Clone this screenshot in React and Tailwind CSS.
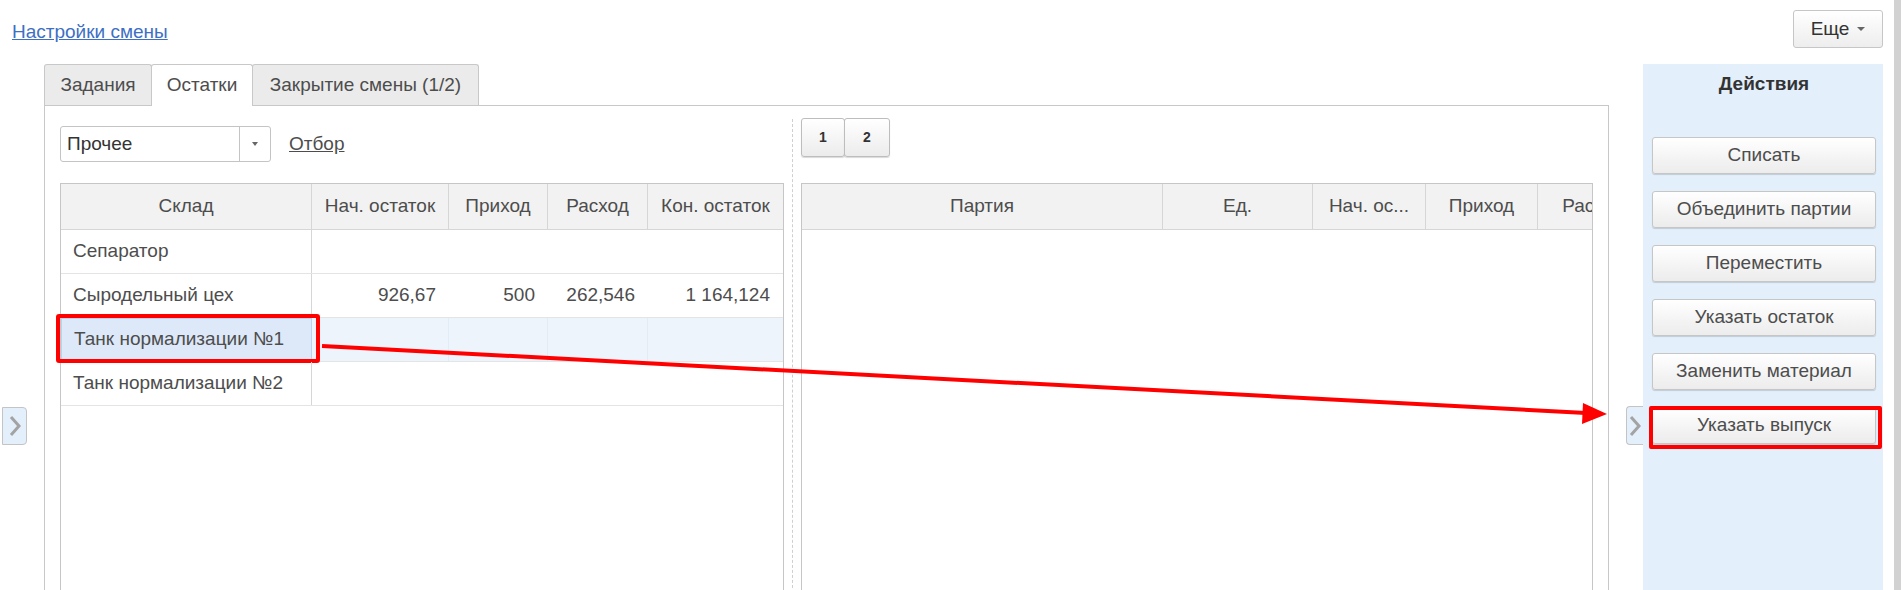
const leftCols = [
  { title: "Склад", w: "w-[251px]" },
  { title: "Нач. остаток", w: "w-[137px]" },
  { title: "Приход", w: "w-[99px]" },
  { title: "Расход", w: "w-[100px]" },
  { title: "Кон. остаток", w: "w-[135px]" },
];

const rightCols = [
  { title: "Партия", w: "w-[361px]" },
  { title: "Ед.", w: "w-[150px]" },
  { title: "Нач. ос...", w: "w-[113px]" },
  { title: "Приход", w: "w-[112px]" },
  { title: "Расход", w: "w-[112px]" },
];

const rows = [
  { name: "Сепаратор", vals: ["", "", "", ""] },
  { name: "Сыродельный цех", vals: ["926,67", "500", "262,546", "1 164,124"] },
  { name: "Танк нормализации №1", vals: ["", "", "", ""], selected: true },
  { name: "Танк нормализации №2", vals: ["", "", "", ""] },
];

const actions = [
  "Списать",
  "Объединить партии",
  "Переместить",
  "Указать остаток",
  "Заменить материал",
  "Указать выпуск",
];

function Chevron({ className }) {
  return (
    <div className={className}>
      <svg width="12" height="22" viewBox="0 0 12 22">
        <polyline points="2,2 10,11 2,20" fill="none" stroke="#a3a3a3" strokeWidth="3" />
      </svg>
    </div>
  );
}

function ActionButton({ label, marked }) {
  return (
    <div className="relative">
      <button className="w-[224px] h-[37px] rounded-[3px] border border-[#c6c6c6] bg-gradient-to-b from-white to-[#ececec] shadow-[0_1px_1px_rgba(0,0,0,0.15)] text-[#4d4d4d]">
        {label}
      </button>
      {marked && (
        <div className="absolute -left-[3px] right-[1px] -top-[1px] -bottom-[5px] border-4 border-[#ff0000] rounded-[2px]" />
      )}
    </div>
  );
}

export default function App() {
  return (
    <div className="relative flex h-[590px] w-[1901px] overflow-hidden bg-white font-['Liberation_Sans',Arial,sans-serif] text-[19px] text-[#4d4d4d]">
      <div className="flex w-[1894px] flex-col">
        {/* Top bar */}
        <div className="flex h-[64px] shrink-0 items-start justify-between">
          <a className="ml-[12px] mt-[21px] leading-[22px] text-[#3d6fc4] underline">Настройки смены</a>
          <button className="mr-[11px] mt-[10px] flex h-[38px] w-[90px] items-center justify-center gap-[8px] rounded-[3px] border border-[#c6c6c6] bg-gradient-to-b from-white to-[#ededed] text-[#333]">
            Еще
            <span className="border-x-[4px] border-t-[4px] border-x-transparent border-t-[#666]" />
          </button>
        </div>

        <div className="flex min-h-0 flex-1 overflow-hidden">
          {/* left collapse */}
          <div className="w-[44px]">
            <Chevron className="ml-[2px] mt-[343px] flex h-[38px] w-[25px] items-center justify-center rounded-r-[4px] border border-[#c4c4c4] bg-[#e3effb]" />
          </div>

          {/* Tab panel */}
          <div className="flex w-[1565px] flex-col">
            <div className="flex h-[41px] shrink-0 items-end">
              <div className="flex h-[41px] w-[108px] items-center justify-center rounded-t-[3px] border border-b-0 border-[#c8c8c8] bg-[#ebebeb]">
                Задания
              </div>
              <div className="relative z-10 -mb-px -ml-px flex h-[42px] w-[102px] items-center justify-center rounded-t-[3px] border border-b-0 border-[#c8c8c8] bg-white pb-px">
                Остатки
              </div>
              <div className="-ml-px flex h-[41px] w-[227px] items-center justify-center rounded-t-[3px] border border-b-0 border-[#c8c8c8] bg-[#ebebeb]">
                Закрытие смены (1/2)
              </div>
            </div>

            <div className="flex flex-1 border border-b-0 border-[#c8c8c8] px-[15px]">
              {/* left pane */}
              <div className="w-[724px] pt-[20px]">
                <div className="flex h-[36px] items-center">
                  <div className="flex h-[36px] w-[211px] rounded-[3px] border border-[#c4c4c4]">
                    <div className="flex flex-1 items-center pl-[6px] text-[#333]">Прочее</div>
                    <div className="flex w-[31px] items-center justify-center border-l border-[#c4c4c4]">
                      <span className="border-x-[3px] border-t-[4px] border-x-transparent border-t-[#666]" />
                    </div>
                  </div>
                  <a className="ml-[18px] text-[#4d4d4d] underline">Отбор</a>
                </div>

                <div className="mt-[21px] h-[420px] border border-[#c6c6c6]">
                  <div className="flex h-[46px] border-b border-[#d6d6d6] bg-[#f2f2f2]">
                    {leftCols.map((c, i) => (
                      <div
                        key={c.title}
                        className={`${c.w} flex items-center justify-center ${i < 4 ? "border-r border-[#d6d6d6]" : ""}`}
                      >
                        {c.title}
                      </div>
                    ))}
                  </div>
                  {rows.map((r) => (
                    <div
                      key={r.name}
                      className={`flex h-[44px] border-b border-[#e4e4e4] ${r.selected ? "bg-[#edf4fc]" : ""}`}
                    >
                      <div
                        className={`relative flex w-[251px] items-center border-r pl-[12px] ${
                          r.selected ? "border border-[#b8d3f0] bg-[#dde9f8]" : "border-[#d6d6d6]"
                        }`}
                      >
                        {r.name}
                        {r.selected && (
                          <div className="absolute -left-[6px] -right-[9px] -top-[5px] -bottom-[3px] border-4 border-[#ff0000] rounded-[3px]" />
                        )}
                      </div>
                      {r.vals.map((v, i) => (
                        <div
                          key={i}
                          className={`${leftCols[i + 1].w} flex items-center justify-end pr-[13px] ${
                            r.selected && i < 3 ? "border-r border-[#e2ecf7]" : ""
                          }`}
                        >
                          {v}
                        </div>
                      ))}
                    </div>
                  ))}
                </div>
              </div>

              {/* splitter */}
              <div className="flex w-[17px] justify-center pt-[13px]">
                <div className="h-full border-l border-dashed border-[#cfcfcf]" />
              </div>

              {/* right pane */}
              <div className="w-[792px] pt-[12px]">
                <div className="flex h-[39px]">
                  <button className="h-[39px] w-[44px] rounded-[3px] border border-[#bdbdbd] bg-gradient-to-b from-white to-[#ececec] text-[14px] font-bold text-[#333] shadow-[0_1px_1px_rgba(0,0,0,0.15)]">
                    1
                  </button>
                  <button className="-ml-px h-[39px] w-[46px] rounded-[3px] border border-[#bdbdbd] bg-gradient-to-b from-white to-[#ececec] text-[14px] font-bold text-[#333] shadow-[0_1px_1px_rgba(0,0,0,0.15)]">
                    2
                  </button>
                </div>

                <div className="mt-[26px] h-[420px] overflow-hidden border border-[#c6c6c6]">
                  <div className="flex h-[46px] border-b border-[#d6d6d6] bg-[#f2f2f2]">
                    {rightCols.map((c) => (
                      <div
                        key={c.title + c.w}
                        className={`${c.w} flex shrink-0 items-center justify-center border-r border-[#d6d6d6]`}
                      >
                        {c.title}
                      </div>
                    ))}
                  </div>
                </div>
              </div>
            </div>
          </div>

          {/* right collapse */}
          <div className="w-[34px]">
            <Chevron className="ml-[17px] mt-[342px] flex h-[39px] w-[17px] items-center justify-center rounded-l-[4px] border border-r-0 border-[#c4c4c4] bg-[#e3effb]" />
          </div>

          {/* Actions */}
          <div className="w-[240px] bg-[#e3effb] pl-[9px] pt-[9px]">
            <div className="w-[224px] text-center font-bold leading-[22px] text-[#333]">Действия</div>
            <div className="mt-[42px] flex flex-col gap-[17px]">
              {actions.map((a) => (
                <ActionButton key={a} label={a} marked={a === "Указать выпуск"} />
              ))}
            </div>
          </div>
          <div className="w-[11px]" />
        </div>
      </div>

      {/* scrollbar strip */}
      <div className="w-[7px] bg-[#d2d2d2]" />

      {/* annotation arrow */}
      <svg className="pointer-events-none absolute left-0 top-0" width="1901" height="590">
        <line x1="322" y1="346" x2="1586" y2="413" stroke="#ff0000" strokeWidth="4" />
        <polygon points="1607,414 1583,403 1582,424" fill="#ff0000" />
      </svg>
    </div>
  );
}
